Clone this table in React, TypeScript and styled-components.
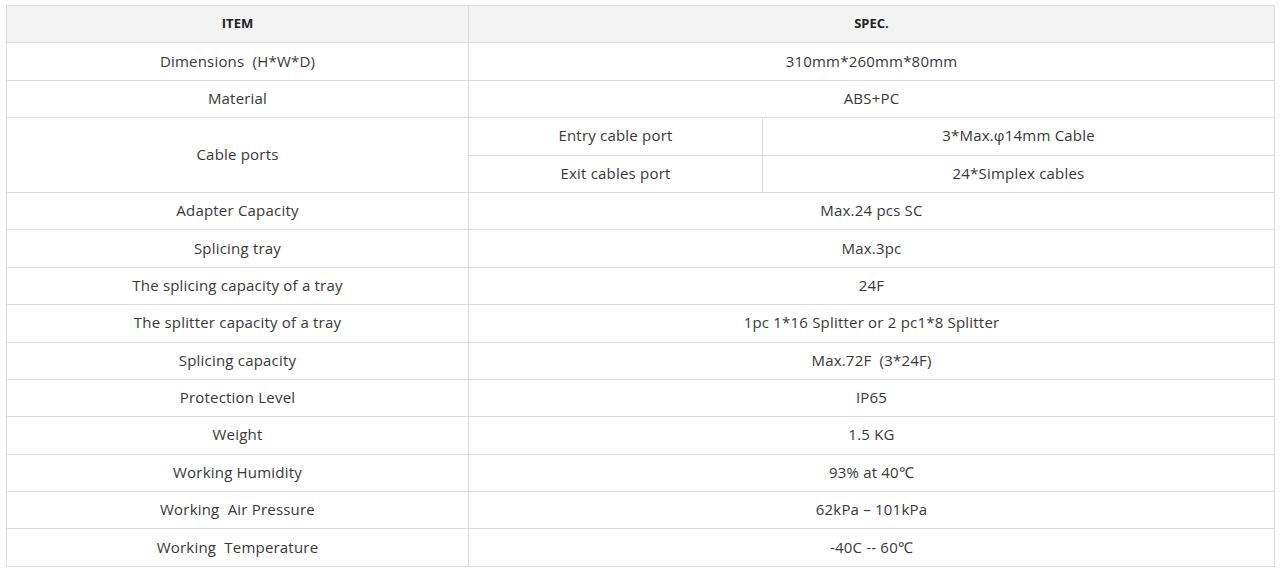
import React, { FC, ReactElement } from 'react';
import styled, { createGlobalStyle } from 'styled-components';

const GlobalStyle = createGlobalStyle`
  html, body {
    margin: 0;
    padding: 0;
    background: #fff;
  }
`;

const Wrapper = styled.div`
  padding: 5px 7px 0 6px;
  font-family: 'Open Sans', 'Liberation Sans', sans-serif;
`;

const Table = styled.table`
  width: 1268px;
  border-collapse: collapse;
  table-layout: fixed;
  color: #383838;
  font-size: 15px;
  letter-spacing: 0.2px;
`;

const Row = styled.tr`
  height: 37.4px;
`;

const HeadCell = styled.th`
  background: #f3f3f3;
  border: 1px solid #dcdcdc;
  font-size: 13px;
  font-weight: 700;
  letter-spacing: 0;
  color: #222;
  text-align: center;
  vertical-align: middle;
  padding: 0 0 2px;
`;

const Cell = styled.td`
  border: 1px solid #dcdcdc;
  text-align: center;
  vertical-align: middle;
  padding: 0 0 2px;
  white-space: pre;
`;

const specs: { item: string; spec: string }[] = [
  { item: 'Adapter Capacity', spec: 'Max.24 pcs SC' },
  { item: 'Splicing tray', spec: 'Max.3pc' },
  { item: 'The splicing capacity of a tray', spec: '24F' },
  { item: 'The splitter capacity of a tray', spec: '1pc 1*16 Splitter or 2 pc1*8 Splitter' },
  { item: 'Splicing capacity', spec: 'Max.72F  (3*24F)' },
  { item: 'Protection Level', spec: 'IP65' },
  { item: 'Weight', spec: '1.5 KG' },
  { item: 'Working Humidity', spec: '93% at 40\u2103' },
  { item: 'Working  Air Pressure', spec: '62kPa \u2013 101kPa' },
  { item: 'Working  Temperature', spec: '-40C -- 60\u2103' },
];

const App: FC = (): ReactElement => (
  <Wrapper>
    <GlobalStyle />
    <Table>
      <colgroup>
        <col style={{ width: 462 }} />
        <col style={{ width: 294 }} />
        <col style={{ width: 512 }} />
      </colgroup>
      <thead>
        <Row>
          <HeadCell>ITEM</HeadCell>
          <HeadCell colSpan={2}>SPEC.</HeadCell>
        </Row>
      </thead>
      <tbody>
        <Row>
          <Cell>Dimensions  (H*W*D)</Cell>
          <Cell colSpan={2}>310mm*260mm*80mm</Cell>
        </Row>
        <Row>
          <Cell>Material</Cell>
          <Cell colSpan={2}>ABS+PC</Cell>
        </Row>
        <Row>
          <Cell rowSpan={2}>Cable ports</Cell>
          <Cell>Entry cable port</Cell>
          <Cell>3*Max.φ14mm Cable</Cell>
        </Row>
        <Row>
          <Cell>Exit cables port</Cell>
          <Cell>24*Simplex cables</Cell>
        </Row>
        {specs.map(s => (
          <Row key={s.item}>
            <Cell>{s.item}</Cell>
            <Cell colSpan={2}>{s.spec}</Cell>
          </Row>
        ))}
      </tbody>
    </Table>
  </Wrapper>
);

export default App;
